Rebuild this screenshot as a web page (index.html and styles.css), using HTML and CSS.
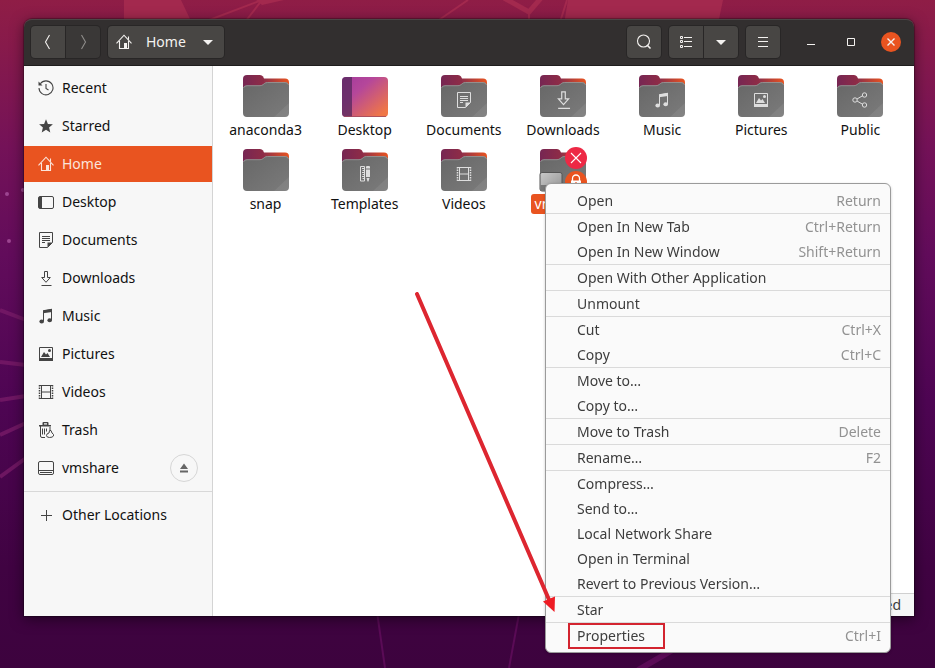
FILE: index.html
```html
<!DOCTYPE html>
<html lang="en">
<head>
<meta charset="utf-8">
<title>Home</title>
<link rel="stylesheet" href="styles.css">
</head>
<body>
<svg class="defs" aria-hidden="true">
  <defs>
    <linearGradient id="g-back" x1="0" y1="0" x2="1" y2="0">
      <stop offset="0" stop-color="#7a2a58"/><stop offset=".45" stop-color="#8e2f4a"/><stop offset="1" stop-color="#e95420"/>
    </linearGradient>
    <linearGradient id="g-tab" x1="0" y1="0" x2="1" y2="0">
      <stop offset="0" stop-color="#762653"/><stop offset="1" stop-color="#8f2c46"/>
    </linearGradient>
    <linearGradient id="g-front" x1="0" y1="0" x2="1" y2="1">
      <stop offset="0" stop-color="#676767"/><stop offset="1" stop-color="#7b7b7b"/>
    </linearGradient>
    <linearGradient id="g-desk" x1="0" y1="0" x2="1" y2="1">
      <stop offset="0" stop-color="#a33a9c"/><stop offset=".35" stop-color="#b5479a"/><stop offset=".9" stop-color="#f07746"/>
    </linearGradient>
    <linearGradient id="g-drive" x1="0" y1="0" x2="1" y2="1">
      <stop offset="0" stop-color="#c9c9c9"/><stop offset="1" stop-color="#929292"/>
    </linearGradient>
    <symbol id="folder" viewBox="0 0 46 42">
      <path d="M0 12V7Q0 3.500 4 3.500H42Q46 3.500 46 7.500V14H0z" fill="url(#g-back)"/>
      <path d="M0 13V4Q0 0 4 0H17Q19 0 20 1.500L21 3.500V9L17 13z" fill="url(#g-tab)"/>
      <path d="M0 14Q0 10.500 4 10.500H17Q19 10.500 20.500 9L21.500 8.200Q22.500 7.200 24.500 7.200H42Q46 7.200 46 11V38Q46 42 42 42H4Q0 42 0 38z" fill="url(#g-front)"/>
      <path d="M.5 13Q1 10.700 4 10.700H17Q19 10.700 20.500 9.300L21.500 8.500Q22.500 7.500 24.500 7.500H42Q45 7.500 45.500 10" fill="none" stroke="#999" stroke-width=".8"/>
      <path d="M46 28V38Q46 42 42 42H31z" fill="#fff" opacity=".07"/>
    </symbol>
    <symbol id="desk-folder" viewBox="0 0 46 42">
      <rect y="2" width="46" height="40" rx="4" fill="url(#g-desk)"/>
      <path d="M10 2H4Q0 2 0 6V38Q0 42 4 42H10z" fill="#56285c" opacity=".75"/>
      <path d="M2 41.500H44" stroke="#a04a60" stroke-width=".8"/>
    </symbol>
    <symbol id="recent" viewBox="0 0 16 16">
      <path d="M2.300 3.800A7 7 0 1 1 1 8M1 8a7 7 0 0 0 .5 2.500M8 4v4.500l2.500 1.500" fill="none" stroke="currentColor" stroke-width="1.100"/>
      <path d="M.5 1.500V5.500H4.500z" fill="currentColor"/>
    </symbol>
    <symbol id="star" viewBox="0 0 16 16"><path d="M8 1.300l1.900 4.600 5 .4-3.800 3.200 1.200 4.900L8 11.800l-4.300 2.600 1.200-4.900L1.100 6.300l5-.4z" fill="currentColor"/></symbol>
    <symbol id="home" viewBox="0 0 16 16">
      <path d="M.5 9.300L8 1.200l7.500 8.100M3.500 7v7.500h9V7M12.500 5.500V2.500" fill="none" stroke="currentColor" stroke-width="1.100"/>
      <path d="M8 9h3v6H8z" fill="currentColor"/>
    </symbol>
    <symbol id="desktop" viewBox="0 0 16 16">
      <rect x=".5" y="2.500" width="15" height="12" rx="1.500" fill="none" stroke="currentColor"/>
      <path d="M1 3h3v11H1z" fill="currentColor"/>
    </symbol>
    <symbol id="document" viewBox="0 0 16 16">
      <path d="M1.500.5h13v10l-5 5h-8zM4 4.500h8M4 6.500h8M4 8.500h8M4 10.500h3" fill="none" stroke="currentColor"/>
      <path d="M14.500 10.500h-5v5z" fill="currentColor"/>
    </symbol>
    <symbol id="download" viewBox="0 0 16 16">
      <path d="M6.500 1.500h3v6h2.800L8 12.300 3.700 7.500h2.800zM3.500 15.500h10" fill="none" stroke="currentColor"/>
    </symbol>
    <symbol id="music" viewBox="0 0 16 16">
      <path d="M5.500 13V3l8-1.500V12" fill="none" stroke="currentColor"/>
      <path d="M5 2.200L14 .7v3.300L5 5.200z" fill="currentColor"/>
      <ellipse cx="3.700" cy="13.500" rx="2.300" ry="2" fill="currentColor"/><ellipse cx="11.700" cy="12.300" rx="2.300" ry="2" fill="currentColor"/>
    </symbol>
    <symbol id="picture" viewBox="0 0 16 16">
      <path d="M1.500 1.500h13v13h-13z" fill="none" stroke="currentColor"/>
      <path d="M1 12h14v3H1zM3 11l3-5 2 2.500 1.500-1.500 2.500 4z" fill="currentColor"/><circle cx="11.500" cy="4.500" r="1.500" fill="currentColor"/>
    </symbol>
    <symbol id="video" viewBox="0 0 16 16">
      <path d="M3.500 1.500h9v13h-9zM3.500 8h9M1 1.500h14M1 14.500h14" fill="none" stroke="currentColor"/>
      <path d="M1.500 1v14M14.500 1v14" stroke="currentColor" stroke-width="1.500" stroke-dasharray="1.500 1"/>
    </symbol>
    <symbol id="trash" viewBox="0 0 16 16">
      <path d="M1 4.500V3h3.500V1q0-1 1-1h4q1 0 1 1v2H13v1.500zM6 1.300v1.200h3V1.300z" fill="currentColor" fill-rule="evenodd"/>
      <path d="M2.500 4v10q0 1.500 1.500 1.500h3M4.500 6.500v6M6.500 6.500v6M8.500 6.500v3M12 5v3" fill="none" stroke="currentColor"/>
      <path d="M11.500 8.500l-.5 2.500q-2.500.5-2.500 2.500t3 2 4-1.500-1.500-3l-1-2.500z" fill="none" stroke="currentColor"/>
    </symbol>
    <symbol id="drive" viewBox="0 0 16 16">
      <path d="M2 1.500h12q1.500 0 1.500 1.500v10q0 1.500-1.500 1.500H2Q.5 14.500.5 13V3Q.5 1.500 2 1.500zM.5 10.500h15M2 12.500h12" fill="none" stroke="currentColor"/>
    </symbol>
    <symbol id="plus" viewBox="0 0 16 16"><path d="M8.500 3v11M3 8.500h11" stroke="currentColor"/></symbol>
    <symbol id="eject" viewBox="0 0 16 16"><path d="M8 3.500l4 5.500H4zM4 10.500h8v2H4z" fill="currentColor"/></symbol>
    <symbol id="template" viewBox="0 0 16 16">
      <path d="M3.500.5h4v14.500h-4z" fill="none" stroke="currentColor"/>
      <path d="M5 2.500h2M5.500 4.500h2M5 6.500h2M5.500 8.500h2M5 10.500h2M5.500 12.500h2" stroke="currentColor"/>
      <path d="M9 1q0-1 1-1h2q1 0 1 1v1.500H9zM9 3.500h4V11H9zM9.500 12h3l-1 3.500h-1z" fill="currentColor"/>
    </symbol>
    <symbol id="share" viewBox="0 0 16 16">
      <path d="M5 7l6-3.500M5 9l6 3.500" stroke="currentColor"/>
      <circle cx="3" cy="8" r="2.200" fill="none" stroke="currentColor"/><circle cx="12.500" cy="3" r="2.200" fill="none" stroke="currentColor"/><circle cx="12.500" cy="13" r="2.200" fill="none" stroke="currentColor"/>
    </symbol>
    <symbol id="prev" viewBox="0 0 16 16"><path d="M9.500 1L5.500 8l4 7" fill="none" stroke="currentColor" stroke-width="1.100"/></symbol>
    <symbol id="next" viewBox="0 0 16 16"><path d="M6.500 1l4 7-4 7" fill="none" stroke="currentColor" stroke-width="1.100"/></symbol>
    <symbol id="caret" viewBox="0 0 16 16"><path d="M3 6h10l-5 5z" fill="currentColor"/></symbol>
    <symbol id="search" viewBox="0 0 16 16"><circle cx="7.500" cy="7" r="6" fill="none" stroke="currentColor" stroke-width="1.100"/><path d="M11 11l3.500 3.500" stroke="currentColor" stroke-width="1.600"/></symbol>
    <symbol id="list" viewBox="0 0 16 16">
      <path d="M6 3.500h8M6 7.500h8M6 12.500h8M2.500 2.500h2v2h-2zM2.500 6.500h2v2h-2zM2.500 11.500h2v2h-2z" fill="none" stroke="currentColor"/>
    </symbol>
    <symbol id="burger" viewBox="0 0 16 16"><path d="M3 3.500h10M3 7.500h10M3 12.500h10" stroke="currentColor"/></symbol>
    <symbol id="min" viewBox="0 0 16 16"><path d="M4 10.500h8" stroke="currentColor"/></symbol>
    <symbol id="max" viewBox="0 0 16 16"><path d="M4.500 4.500h7v7h-7z" fill="none" stroke="currentColor"/></symbol>
    <symbol id="close" viewBox="0 0 16 16"><path d="M4.500 4.500l7 7M11.500 4.500l-7 7" stroke="currentColor" stroke-width="1.400"/></symbol>
    <symbol id="lock" viewBox="0 0 16 16"><path d="M4.500 7V4.500a3.500 3.500 0 0 1 7 0V7" fill="none" stroke="currentColor" stroke-width="1.300"/><path d="M3 6.500h10V13H3z" fill="currentColor"/><circle cx="8" cy="9.500" r="1.200" fill="#e95420"/></symbol>
  </defs>
</svg>

<svg class="wallpaper" viewBox="0 0 935 668" preserveAspectRatio="none" aria-hidden="true">
  <g fill="#a3294e">
    <path d="M124 0H181L190 19V24H124zM568 0H723L718 24H564z"/>
  </g>
  <g fill="none" stroke="#a3294e" stroke-width="2">
    <path d="M204 22L262 0M245 22L262 0M436 22L468 0M529 22V12M560 22L567 0"/>
    <path d="M504 -2L529 12L541 -2" stroke-width="5"/>
  </g>
  <path d="M256 0H284L262 5z" fill="#a3294e"/>
  <g fill="none" stroke="#7a1c68" stroke-width="4" opacity=".75">
    <path d="M0 310L26 320M0 362L26 365M0 400L26 396M0 435L26 423M0 477L26 458"/>
  </g>
  <g fill="none" stroke="#5a0b56" stroke-width="2">
    <path d="M519 614L509 668M377 612L385 668"/>
    <path d="M638 670L676 648" stroke-width="6"/>
  </g>
  <g fill="#9c4590"><circle cx="7" cy="194" r="2"/><circle cx="23" cy="190" r="2"/><circle cx="9" cy="241" r="2"/></g>
</svg>

<main class="window">
  <header class="titlebar">
    <div class="group">
      <button class="btn" aria-label="Back"><svg class="icon"><use href="#prev"/></svg></button>
      <button class="btn btn-off" aria-label="Forward"><svg class="icon"><use href="#next"/></svg></button>
    </div>
    <div class="group">
      <button class="btn btn-path"><svg class="icon"><use href="#home"/></svg><span>Home</span><svg class="icon"><use href="#caret"/></svg></button>
    </div>
    <div class="spacer"></div>
    <div class="group"><button class="btn" aria-label="Search"><svg class="icon"><use href="#search"/></svg></button></div>
    <div class="group">
      <button class="btn" aria-label="List view"><svg class="icon"><use href="#list"/></svg></button>
      <button class="btn" aria-label="View options"><svg class="icon"><use href="#caret"/></svg></button>
    </div>
    <div class="group"><button class="btn" aria-label="Menu"><svg class="icon"><use href="#burger"/></svg></button></div>
    <div class="controls">
      <button class="control" aria-label="Minimize"><svg class="icon"><use href="#min"/></svg></button>
      <button class="control" aria-label="Maximize"><svg class="icon"><use href="#max"/></svg></button>
      <button class="control" aria-label="Close"><span class="close"><svg class="icon"><use href="#close"/></svg></span></button>
    </div>
  </header>

  <div class="body">
    <nav class="sidebar">
      <a class="place" href="#recent"><svg class="icon"><use href="#recent"/></svg>Recent</a>
      <a class="place" href="#starred"><svg class="icon"><use href="#star"/></svg>Starred</a>
      <a class="place place-on" href="#home"><svg class="icon"><use href="#home"/></svg>Home</a>
      <a class="place" href="#desktop"><svg class="icon"><use href="#desktop"/></svg>Desktop</a>
      <a class="place" href="#documents"><svg class="icon"><use href="#document"/></svg>Documents</a>
      <a class="place" href="#downloads"><svg class="icon"><use href="#download"/></svg>Downloads</a>
      <a class="place" href="#music"><svg class="icon"><use href="#music"/></svg>Music</a>
      <a class="place" href="#pictures"><svg class="icon"><use href="#picture"/></svg>Pictures</a>
      <a class="place" href="#videos"><svg class="icon"><use href="#video"/></svg>Videos</a>
      <a class="place" href="#trash"><svg class="icon"><use href="#trash"/></svg>Trash</a>
      <div class="mount">
        <a class="place" href="#vmshare"><svg class="icon"><use href="#drive"/></svg>vmshare</a>
        <button class="eject" aria-label="Eject"><svg class="icon"><use href="#eject"/></svg></button>
      </div>
      <hr class="rule">
      <a class="place" href="#other"><svg class="icon"><use href="#plus"/></svg>Other Locations</a>
    </nav>

    <section class="files">
      <div class="file"><div class="thumb"><svg class="folder"><use href="#folder"/></svg></div><span class="name">anaconda3</span></div>
      <div class="file"><div class="thumb"><svg class="folder"><use href="#desk-folder"/></svg></div><span class="name">Desktop</span></div>
      <div class="file"><div class="thumb"><svg class="folder"><use href="#folder"/></svg><svg class="emblem"><use href="#document"/></svg></div><span class="name">Documents</span></div>
      <div class="file"><div class="thumb"><svg class="folder"><use href="#folder"/></svg><svg class="emblem emblem-big"><use href="#download"/></svg></div><span class="name">Downloads</span></div>
      <div class="file"><div class="thumb"><svg class="folder"><use href="#folder"/></svg><svg class="emblem"><use href="#music"/></svg></div><span class="name">Music</span></div>
      <div class="file"><div class="thumb"><svg class="folder"><use href="#folder"/></svg><svg class="emblem"><use href="#picture"/></svg></div><span class="name">Pictures</span></div>
      <div class="file"><div class="thumb"><svg class="folder"><use href="#folder"/></svg><svg class="emblem"><use href="#share"/></svg></div><span class="name">Public</span></div>
      <div class="file"><div class="thumb"><svg class="folder"><use href="#folder"/></svg></div><span class="name">snap</span></div>
      <div class="file"><div class="thumb"><svg class="folder"><use href="#folder"/></svg><svg class="emblem"><use href="#template"/></svg></div><span class="name">Templates</span></div>
      <div class="file"><div class="thumb"><svg class="folder"><use href="#folder"/></svg><svg class="emblem"><use href="#video"/></svg></div><span class="name">Videos</span></div>
      <div class="file"><div class="thumb"><svg class="folder"><use href="#folder"/></svg>
        <svg class="mini-drive" viewBox="0 0 24 20"><path d="M3 .5h18q2 0 2 2V17q0 2-2 2H3q-2 0-2-2V2.500q0-2 2-2z" fill="url(#g-drive)" stroke="#555"/><path d="M1.500 13h21v4q0 1.500-1.500 1.500H3q-1.500 0-1.500-1.500z" fill="#777"/></svg>
        <span class="badge badge-x"><svg viewBox="0 0 16 16"><path d="M3 3l10 10M13 3L3 13" stroke="#fff" stroke-width="1.100"/></svg></span>
        <span class="badge badge-lock"><svg><use href="#lock"/></svg></span>
      </div><span class="name name-on">vmshare</span></div>
    </section>
    <div class="status">“vmshare” selected</div>
  </div>

  <div class="menu" role="menu">
    <button class="item" role="menuitem"><span>Open</span><kbd>Return</kbd></button>
    <hr>
    <button class="item" role="menuitem"><span>Open In New Tab</span><kbd>Ctrl+Return</kbd></button>
    <button class="item" role="menuitem"><span>Open In New Window</span><kbd>Shift+Return</kbd></button>
    <hr>
    <button class="item" role="menuitem"><span>Open With Other Application</span></button>
    <hr>
    <button class="item" role="menuitem"><span>Unmount</span></button>
    <hr>
    <button class="item" role="menuitem"><span>Cut</span><kbd>Ctrl+X</kbd></button>
    <button class="item" role="menuitem"><span>Copy</span><kbd>Ctrl+C</kbd></button>
    <hr>
    <button class="item" role="menuitem"><span>Move to…</span></button>
    <button class="item" role="menuitem"><span>Copy to…</span></button>
    <hr>
    <button class="item" role="menuitem"><span>Move to Trash</span><kbd>Delete</kbd></button>
    <hr>
    <button class="item" role="menuitem"><span>Rename…</span><kbd>F2</kbd></button>
    <hr>
    <button class="item" role="menuitem"><span>Compress…</span></button>
    <button class="item" role="menuitem"><span>Send to…</span></button>
    <button class="item" role="menuitem"><span>Local Network Share</span></button>
    <button class="item" role="menuitem"><span>Open in Terminal</span></button>
    <button class="item" role="menuitem"><span>Revert to Previous Version…</span></button>
    <hr>
    <button class="item" role="menuitem"><span>Star</span></button>
    <hr>
    <button class="item" role="menuitem"><span class="marked">Properties</span><kbd>Ctrl+I</kbd></button>
  </div>

  <svg class="arrow" viewBox="0 0 144 322" aria-hidden="true">
    <path d="M3 2L136 310" stroke="#dd2630" stroke-width="4" stroke-linecap="round"/>
    <path d="M129 309.500L141 304.500L140.500 320z" fill="#ee1c24"/>
  </svg>
</main>
</body>
</html>
```
FILE: styles.css
```css
* {
  box-sizing: border-box;
}

body {
  margin: 0;
  min-height: 100vh;
  padding: 19px 21px 52px 24px;
  display: flex;
  overflow: hidden;
  background: linear-gradient(180deg, #8f1d46 0%, #871a4b 7%, #741258 22%, #620c5b 38%, #4e0553 60%, #400342 85%, #3d033e 100%);
  color: #111;
  font: 14px/20px "Noto Sans", "Open Sans", sans-serif;
}

button {
  margin: 0;
  padding: 0;
  border: 0;
  background: none;
  color: inherit;
  font: inherit;
}

.defs {
  position: absolute;
  width: 0;
  height: 0;
}

.wallpaper {
  position: fixed;
  inset: 0;
  width: 100%;
  height: 100%;
}

.icon {
  width: 16px;
  height: 16px;
  flex: none;
}

.window {
  position: relative;
  flex: 1;
  display: flex;
  flex-direction: column;
  border-radius: 8px 8px 0 0;
  box-shadow: 0 0 1px 1px rgba(0, 0, 0, .3), 0 3px 14px rgba(0, 0, 0, .5);
}

.titlebar {
  display: flex;
  align-items: flex-start;
  gap: 6px;
  height: 47px;
  padding: 5px 3px 0 6px;
  border-top: 1px solid #4a4646;
  border-bottom: 1px solid #1f1d1d;
  border-radius: 8px 8px 0 0;
  background: #322f2f;
  color: #f4f2f0;
}

.group {
  display: flex;
  gap: 1px;
  padding: 1px;
  border-radius: 5px;
  background: #282626;
}

.btn {
  display: flex;
  align-items: center;
  justify-content: center;
  width: 34px;
  height: 32px;
  background: #484644;
}

.btn:first-child {
  border-radius: 4px 0 0 4px;
}

.btn:last-child {
  border-radius: 0 4px 4px 0;
}

.btn:only-child {
  border-radius: 4px;
}

.btn-off {
  background: #3a3837;
  color: #8f8d8b;
}

.btn-path {
  width: auto;
  padding: 0 8px;
  gap: 14px;
}

.spacer {
  flex: 1;
}

.controls {
  display: flex;
  margin: 6px 0 0 4px;
}

.control {
  display: flex;
  align-items: center;
  justify-content: center;
  width: 40px;
  height: 22px;
}

.close {
  display: flex;
  align-items: center;
  justify-content: center;
  width: 20px;
  height: 20px;
  border-radius: 50%;
  background: #e95420;
}

.body {
  position: relative;
  flex: 1;
  display: flex;
  background: #fff;
}

.sidebar {
  display: flex;
  flex-direction: column;
  gap: 2px;
  width: 189px;
  padding-top: 4px;
  border-right: 1px solid #d4d4d4;
  background: #f7f7f7;
}

.place {
  flex: none;
  display: flex;
  align-items: center;
  gap: 8px;
  height: 36px;
  padding-left: 14px;
  color: #111;
  text-decoration: none;
}

.place .icon {
  color: #444;
}

.place-on,
.place-on .icon {
  color: #fbe4da;
}

.place-on {
  background: #e95420;
}

.mount {
  display: flex;
  align-items: center;
  justify-content: space-between;
  padding-right: 14px;
}

.eject {
  display: flex;
  align-items: center;
  justify-content: center;
  width: 28px;
  height: 28px;
  border: 1px solid #d6d6d6;
  border-radius: 50%;
  color: #666;
}

.rule {
  width: 100%;
  margin: 3px 0;
  border: 0;
  border-top: 1px solid #d8d8d8;
}

.files {
  flex: 1;
  display: grid;
  grid-template-columns: repeat(7, 1fr);
  align-content: start;
  row-gap: 9px;
  padding: 9px 4px 9px 3px;
}

.file {
  display: flex;
  flex-direction: column;
  align-items: center;
  gap: 3px;
}

.thumb {
  position: relative;
  width: 46px;
  height: 42px;
}

.folder {
  display: block;
  width: 46px;
  height: 42px;
}

.emblem {
  position: absolute;
  left: 15px;
  top: 17px;
  width: 16px;
  height: 16px;
  color: #dedede;
}

.emblem-big {
  left: 14px;
  top: 15px;
  width: 19px;
  height: 19px;
}

.mini-drive {
  position: absolute;
  left: -1px;
  top: 23px;
  width: 24px;
  height: 20px;
}

.badge {
  position: absolute;
  left: 25px;
  display: flex;
  align-items: center;
  justify-content: center;
  width: 22px;
  height: 22px;
  border-radius: 50%;
  color: #fff;
}

.badge svg {
  width: 16px;
  height: 16px;
}

.badge-x {
  top: -2px;
  background: #ed2945;
}

.badge-lock {
  top: 22px;
  background: #e95420;
}

.name {
  padding: 0 4px;
  border-radius: 3px;
}

.name-on {
  background: #e95420;
  color: #fff;
}

.status {
  position: absolute;
  right: 0;
  bottom: 0;
  padding: 1px 13px;
  border-top: 1px solid #d0d0d0;
  background: #f6f7f7;
  color: #3d3d3d;
}

.menu {
  position: absolute;
  left: 521px;
  top: 164px;
  width: 346px;
  padding: 4px 0;
  border: 1px solid #9b9b9b;
  border-radius: 6px;
  background: #fafafa;
  color: #3d3d3d;
  box-shadow: 0 1px 3px rgba(0, 0, 0, .2);
}

.item {
  display: flex;
  align-items: center;
  justify-content: space-between;
  width: 100%;
  height: 25px;
  padding: 0 9px 0 31px;
}

.item kbd {
  color: #929292;
  font: inherit;
}

.menu hr {
  height: 1px;
  margin: 0;
  border: 0;
  background: #dadada;
}

.marked {
  margin-left: -9px;
  padding: 1px 18px 1px 7px;
  border: 2px solid #d3242f;
}

.arrow {
  position: absolute;
  left: 390px;
  top: 273px;
  width: 144px;
  height: 322px;
}
```
